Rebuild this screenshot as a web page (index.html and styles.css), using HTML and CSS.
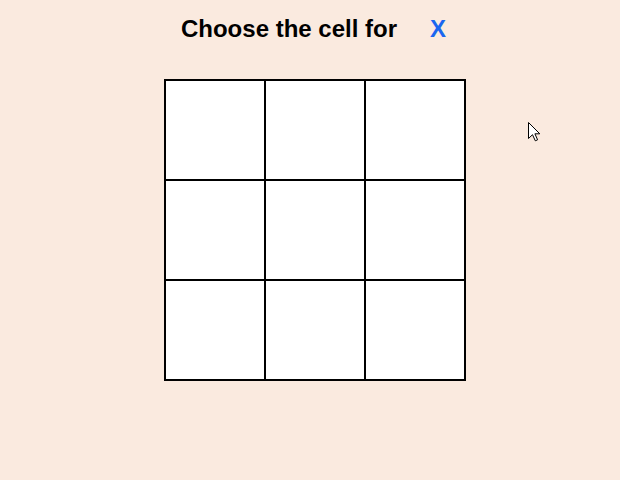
FILE: index.html
```html
<!DOCTYPE html>
<html>
<head>
<meta charset="utf-8">
<link rel="stylesheet" href="styles.css">
</head>
<body>
<div class="page">
  <h1 class="title"><span>Choose the cell for</span><span class="player">X</span></h1>
  <div class="board">
    <div class="cell"></div><div class="cell"></div><div class="cell"></div>
    <div class="cell"></div><div class="cell"></div><div class="cell"></div>
    <div class="cell"></div><div class="cell"></div><div class="cell"></div>
  </div>
</div>
<svg class="cursor" width="13" height="20" viewBox="0 0 13 20" xmlns="http://www.w3.org/2000/svg">
  <path d="M0.5 0.5 L0.5 16.5 L4.5 12.7 L7.3 18.8 L9.6 17.8 L6.9 11.8 L11.8 11.8 Z" fill="#fff" stroke="#000" stroke-width="1" stroke-linejoin="miter"/>
</svg>
</body>
</html>
```
FILE: styles.css
```css
html, body {
  margin: 0;
  padding: 0;
}
body {
  background: #faeadf;
  width: 620px;
  height: 480px;
  overflow: hidden;
  font-family: "Liberation Sans", Arial, sans-serif;
  position: relative;
}
.page {
  display: flex;
  flex-direction: column;
  align-items: center;
  padding-left: 10px;
}
.title {
  margin: 15px 3px 0 0;
  font-size: 24px;
  line-height: 28px;
  font-weight: bold;
  color: #000;
  display: flex;
  gap: 33px;
}
.player {
  color: #1a66f0;
}
.board {
  margin-top: 36px;
  display: grid;
  grid-template-columns: repeat(3, 100px);
  grid-auto-rows: 100px;
  border: 1px solid #000;
}
.cell {
  background: #fff;
  border: 1px solid #000;
}
.cursor {
  position: absolute;
  left: 528px;
  top: 122px;
}
```
